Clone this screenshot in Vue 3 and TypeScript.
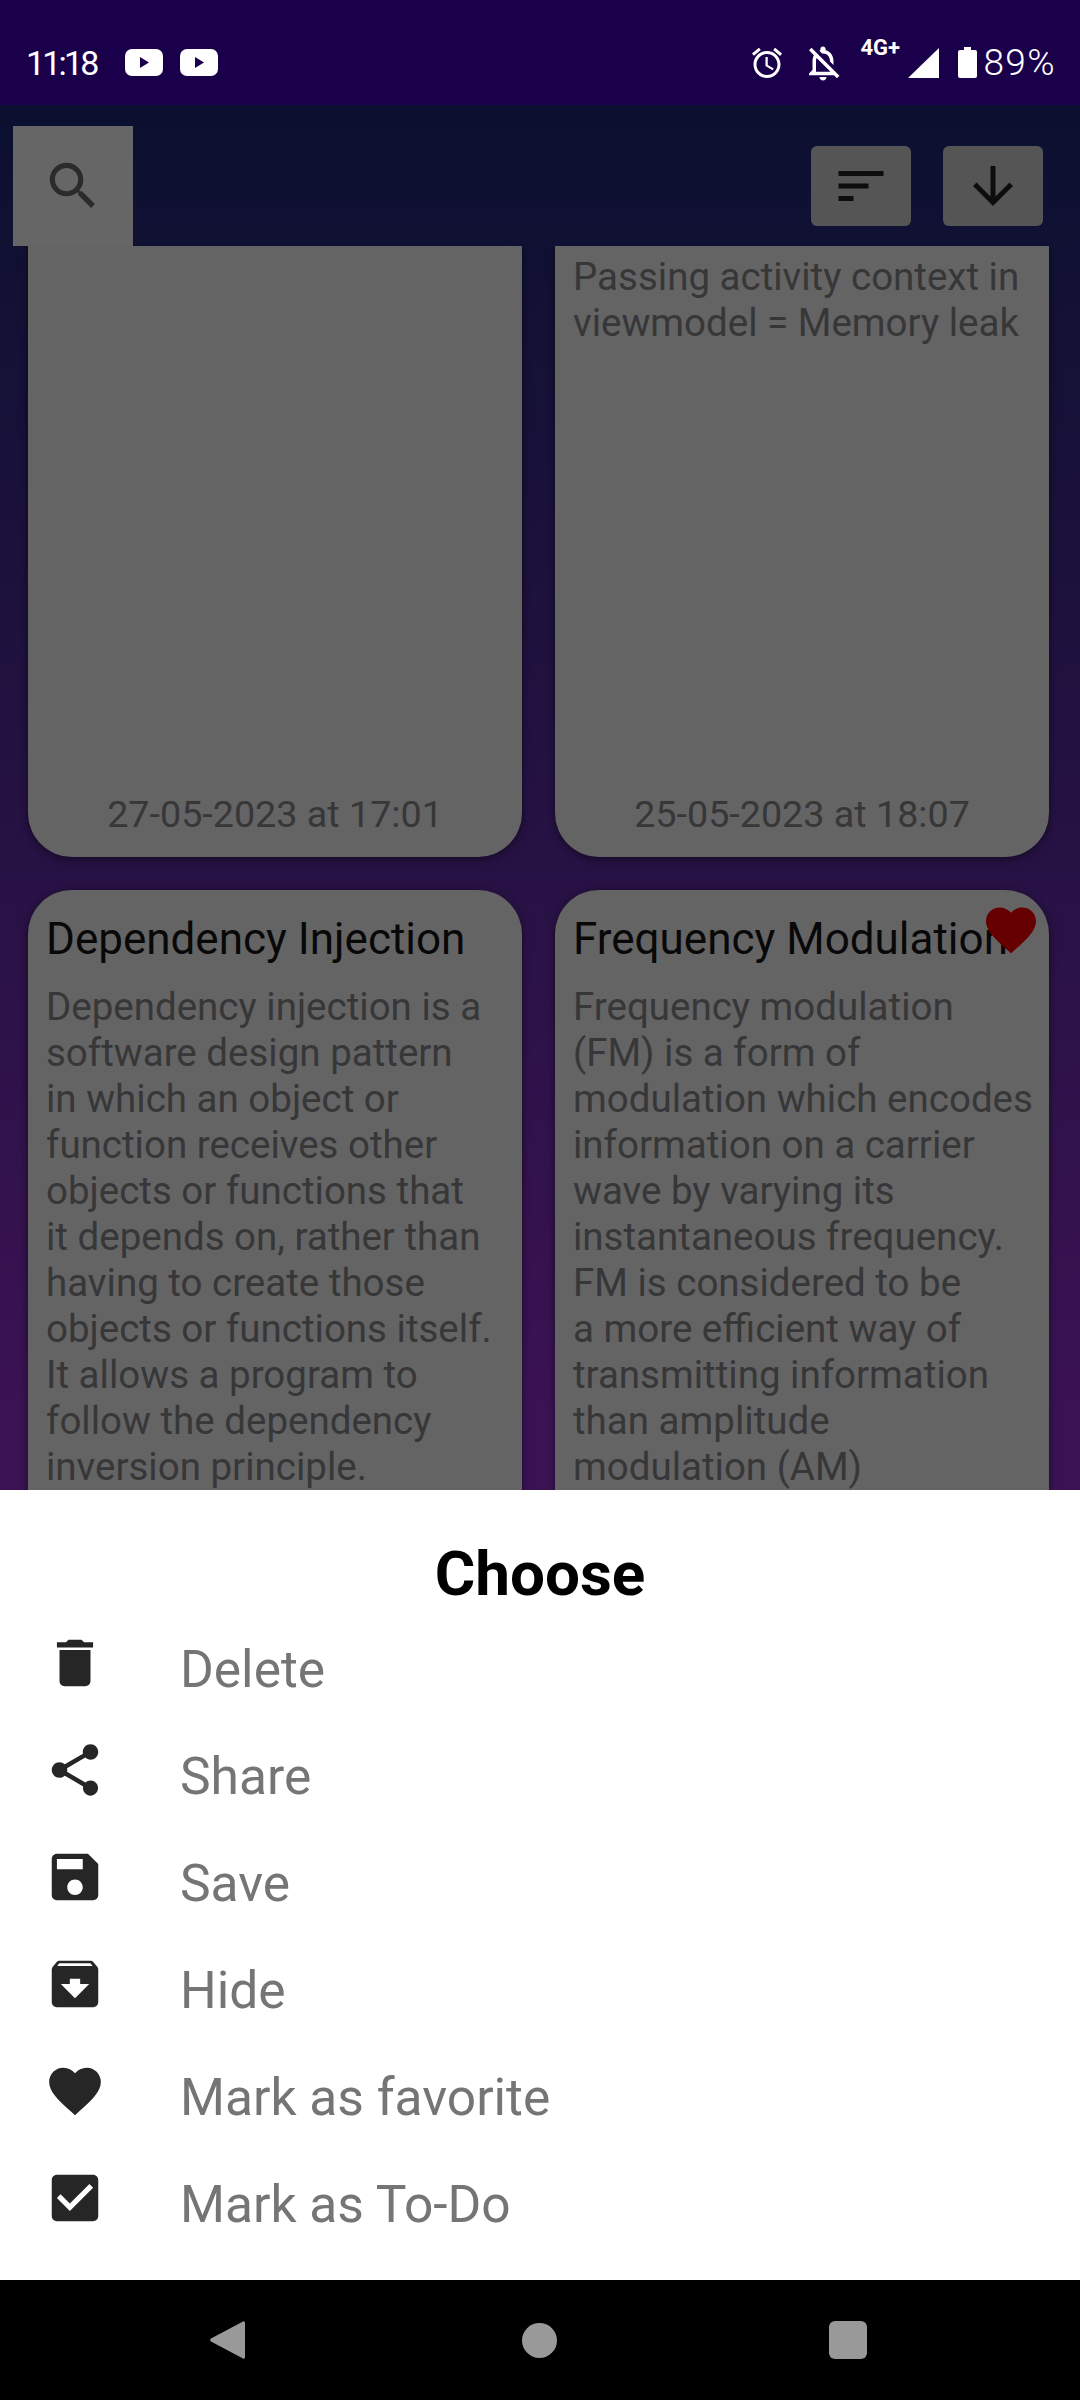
<template>
    <div class="phone">
        <div class="status">
            <span class="status__time">11:18</span>
            <svg v-for="i in 2" :key="i" class="status__yt" viewBox="0 0 38 27">
                <rect width="38" height="27" rx="7" fill="#fff" />
                <path d="M15 8l9 5.5-9 5.5z" fill="#1a004a" />
            </svg>
            <div class="status__right">
                <svg class="status__icon" viewBox="0 0 24 24"><path :d="icons.alarm" /></svg>
                <svg class="status__icon status__icon--bell" viewBox="0 0 24 24"><path :d="icons.bellOff" /></svg>
                <span class="status__net">4G+</span>
                <svg class="status__signal" viewBox="0 0 31 30"><path d="M31 0v30H0z" /></svg>
                <svg class="status__battery" viewBox="0 0 19 31">
                    <path d="M6 0h7v3h4a2 2 0 0 1 2 2v24a2 2 0 0 1-2 2H2a2 2 0 0 1-2-2V5a2 2 0 0 1 2-2h4z" />
                </svg>
                <span class="status__pct">89%</span>
            </div>
        </div>

        <div class="main">
            <div class="toolbar">
                <button class="toolbar__search">
                    <svg viewBox="0 0 24 24"><path :d="icons.search" /></svg>
                </button>
                <button class="toolbar__btn">
                    <svg viewBox="0 0 24 24"><path :d="icons.sort" /></svg>
                </button>
                <button class="toolbar__btn">
                    <svg viewBox="0 0 24 24"><path :d="icons.down" /></svg>
                </button>
            </div>

            <div class="notes">
                <div v-for="note in notes" :key="note.id" :class="['note', { 'note--clipped': note.clipped }]">
                    <svg v-if="note.favorite" class="note__heart" viewBox="0 0 24 24"><path :d="icons.heart" /></svg>
                    <div v-if="note.title" class="note__title">{{ note.title }}</div>
                    <div class="note__body">
                        <div v-for="line in note.lines" :key="line">{{ line }}</div>
                    </div>
                    <div v-if="note.date" class="note__date">{{ note.date }}</div>
                </div>
            </div>

            <div class="scrim"></div>

            <div class="sheet">
                <div class="sheet__title">Choose</div>
                <div v-for="action in actions" :key="action.label" class="action">
                    <svg class="action__icon" viewBox="0 0 24 24"><path :d="action.icon" /></svg>
                    <span class="action__label">{{ action.label }}</span>
                </div>
            </div>
        </div>

        <div class="nav">
            <svg class="nav__back" viewBox="0 0 36 40"><path d="M34 1.5L2 18.5a2 2 0 0 0 0 3l32 17a1.4 1.4 0 0 0 2-1.3V2.8a1.4 1.4 0 0 0-2-1.3z" /></svg>
            <div class="nav__home"></div>
            <div class="nav__recent"></div>
        </div>
    </div>
</template>

<script setup lang="ts">
const icons = {
    alarm: 'M22 5.72l-4.6-3.86-1.29 1.53 4.6 3.86L22 5.72zM7.88 3.39L6.6 1.86 2 5.71l1.29 1.53 4.59-3.85zM12.5 8H11v6l4.75 2.85.75-1.23-4-2.37V8zM12 4c-4.97 0-9 4.03-9 9s4.03 9 9 9 9-4.03 9-9-4.03-9-9-9zm0 16c-3.87 0-7-3.13-7-7s3.13-7 7-7 7 3.13 7 7-3.13 7-7 7z',
    bellOff: 'M12 22c1.1 0 2-.9 2-2h-4c0 1.1.9 2 2 2zm0-15.5c2.49 0 4 2.02 4 4.5v.1l2 2V11c0-3.07-1.63-5.64-4.5-6.32V4c0-.83-.67-1.5-1.5-1.5s-1.5.67-1.5 1.5v.68c-.24.06-.47.15-.69.23l1.64 1.64c.18-.02.36-.05.55-.05zM5.41 3.35L4 4.76l2.81 2.81C6.29 8.57 6 9.74 6 11v5l-2 2v1h14.24l1.74 1.74 1.41-1.41L5.41 3.35zM16 17H8v-6c0-.68.12-1.32.34-1.9L16 16.76V17z',
    search: 'M15.5 14h-.79l-.28-.27C15.41 12.59 16 11.11 16 9.5 16 5.91 13.09 3 9.5 3S3 5.91 3 9.5 5.91 16 9.5 16c1.61 0 3.09-.59 4.23-1.57l.27.28v.79l5 4.99L20.49 19l-4.99-5zm-6 0C7.01 14 5 11.99 5 9.5S7.01 5 9.5 5 14 7.01 14 9.5 11.99 14 9.5 14z',
    sort: 'M3 18h6v-2H3v2zM3 6v2h18V6H3zm0 7h12v-2H3v2z',
    down: 'M20 12l-1.41-1.41L13 16.17V4h-2v12.17l-5.58-5.6L4 12l8 8 8-8z',
    heart: 'M12 21.35l-1.45-1.32C5.4 15.36 2 12.28 2 8.5 2 5.42 4.42 3 7.5 3c1.74 0 3.41.81 4.5 2.09C13.09 3.81 14.76 3 16.5 3 19.58 3 22 5.42 22 8.5c0 3.78-3.4 6.86-8.55 11.54L12 21.35z',
    trash: 'M6 19c0 1.1.9 2 2 2h8c1.1 0 2-.9 2-2V7H6v12zM19 4h-3.5l-1-1h-5l-1 1H5v2h14V4z',
    share: 'M18 16.08c-.76 0-1.44.3-1.96.77L8.91 12.7c.05-.23.09-.46.09-.7s-.04-.47-.09-.7l7.05-4.11c.54.5 1.25.81 2.04.81 1.66 0 3-1.34 3-3s-1.34-3-3-3-3 1.34-3 3c0 .24.04.47.09.7L8.04 9.81C7.5 9.31 6.79 9 6 9c-1.66 0-3 1.34-3 3s1.34 3 3 3c.79 0 1.5-.31 2.04-.81l7.12 4.16c-.05.21-.08.43-.08.65 0 1.61 1.31 2.92 2.92 2.92 1.61 0 2.92-1.31 2.92-2.92s-1.31-2.92-2.92-2.92z',
    save: 'M17 3H5c-1.11 0-2 .9-2 2v14c0 1.1.89 2 2 2h14c1.1 0 2-.9 2-2V7l-4-4zm-5 16c-1.66 0-3-1.34-3-3s1.34-3 3-3 3 1.34 3 3-1.34 3-3 3zm3-10H5V5h10v4z',
    archive: 'M20.54 5.23l-1.39-1.68C18.88 3.21 18.47 3 18 3H6c-.47 0-.88.21-1.16.55L3.46 5.23C3.17 5.57 3 6.02 3 6.5V19c0 1.1.9 2 2 2h14c1.1 0 2-.9 2-2V6.5c0-.48-.17-.93-.46-1.27zM12 17.5L6.5 12H10v-2h4v2h3.5L12 17.5zM5.12 5l.81-1h12l.94 1H5.12z',
    check: 'M19 3H5c-1.11 0-2 .9-2 2v14c0 1.1.89 2 2 2h14c1.1 0 2-.9 2-2V5c0-1.1-.89-2-2-2zm-9 14l-5-5 1.41-1.41L10 14.17l7.59-7.59L19 8l-9 9z',
}

const notes = [
    { id: 1, clipped: true, lines: [], date: '27-05-2023 at 17:01' },
    {
        id: 2,
        clipped: true,
        lines: ['Passing activity context in', 'viewmodel = Memory leak'],
        date: '25-05-2023 at 18:07',
    },
    {
        id: 3,
        title: 'Dependency Injection',
        lines: [
            'Dependency injection is a',
            'software design pattern',
            'in which an object or',
            'function receives other',
            'objects or functions that',
            'it depends on, rather than',
            'having to create those',
            'objects or functions itself.',
            'It allows a program to',
            'follow the dependency',
            'inversion principle.',
        ],
    },
    {
        id: 4,
        title: 'Frequency Modulation',
        favorite: true,
        lines: [
            'Frequency modulation',
            '(FM) is a form of',
            'modulation which encodes',
            'information on a carrier',
            'wave by varying its',
            'instantaneous frequency.',
            'FM is considered to be',
            'a more efficient way of',
            'transmitting information',
            'than amplitude',
            'modulation (AM)',
        ],
    },
]

const actions = [
    { label: 'Delete', icon: icons.trash },
    { label: 'Share', icon: icons.share },
    { label: 'Save', icon: icons.save },
    { label: 'Hide', icon: icons.archive },
    { label: 'Mark as favorite', icon: icons.heart },
    { label: 'Mark as To-Do', icon: icons.check },
]
</script>

<style>
body {
    margin: 0;
    background: #000;
}
</style>

<style scoped>
.phone {
    display: flex;
    flex-direction: column;
    width: 1080px;
    height: 2400px;
    overflow: hidden;
    font-family: Roboto, "Noto Sans", sans-serif;
}

/* Status bar */
.status {
    display: flex;
    align-items: center;
    flex: none;
    height: 105px;
    padding: 20px 24px 0 26px;
    box-sizing: border-box;
    background: #1a004a;
    color: #fff;
}

.status__time {
    width: 99px;
    font-size: 34px;
    letter-spacing: -2.8px;
}

.status__yt {
    width: 38px;
    height: 27px;
    margin-right: 17px;
}

.status__right {
    display: flex;
    align-items: center;
    margin-left: auto;
}

.status__icon {
    width: 36px;
    height: 36px;
    fill: #fff;
    margin-right: 20px;
}

.status__icon--bell {
    width: 42px;
    height: 42px;
    margin-right: 16px;
    margin-left: -3px;
}

.status__net {
    align-self: flex-start;
    width: 48px;
    font-size: 22px;
    font-weight: 700;
    line-height: 22px;
    margin-top: -4px;
}

.status__signal {
    width: 31px;
    height: 30px;
    fill: #fff;
    margin-right: 19px;
}

.status__battery {
    width: 19px;
    height: 31px;
    fill: #fff;
    margin-right: 6px;
}

.status__pct {
    font-size: 37px;
    font-weight: 300;
    letter-spacing: 1.4px;
}

/* Main area with gradient */
.main {
    position: relative;
    flex: 1;
    min-height: 0;
    overflow: hidden;
    background: linear-gradient(180deg, #1d2a78 0%, #942fd0 60%, #942fd0 100%);
}

.toolbar {
    display: flex;
    align-items: center;
    height: 141px;
    padding: 21px 37px 0 13px;
    box-sizing: border-box;
}

.toolbar button {
    display: flex;
    align-items: center;
    justify-content: center;
    padding: 0;
    border: 0;
}

.toolbar__search {
    width: 120px;
    height: 120px;
    margin-right: auto;
    background: #fff;
}

.toolbar__search svg {
    width: 62px;
    height: 62px;
    fill: #6b6b6b;
}

.toolbar__btn {
    width: 100px;
    height: 80px;
    margin-left: 32px;
    border-radius: 6px;
    background: #d4d4d4;
}

.toolbar__btn svg {
    width: 60px;
    height: 60px;
    fill: #222;
}

/* Notes grid */
.notes {
    display: grid;
    grid-template-columns: 494px 494px;
    grid-auto-rows: min-content;
    column-gap: 33px;
    row-gap: 33px;
    padding: 0 31px 0 28px;
    height: 1400px;
    overflow: hidden;
}

.note {
    position: relative;
    box-sizing: border-box;
    height: 900px;
    padding: 18px 10px 0 18px;
    border-radius: 44px;
    background: #f9f9fc;
    box-shadow: 0 2px 8px rgba(0, 0, 0, 0.5);
    white-space: nowrap;
}

.note--clipped {
    height: 611px;
    padding-top: 0;
    border-radius: 0 0 44px 44px;
}

.note__heart {
    position: absolute;
    top: 10px;
    right: 8px;
    width: 60px;
    height: 60px;
    fill: #ff0000;
}

.note__title {
    font-size: 44px;
    line-height: 62px;
    color: #161616;
    margin-bottom: 14px;
}

.note__body {
    font-size: 38.5px;
    line-height: 46px;
    color: #8a8a8c;
}

.note--clipped .note__body {
    padding-top: 8px;
}

.note__date {
    position: absolute;
    right: 0;
    bottom: 20px;
    left: 0;
    font-size: 37.7px;
    line-height: 46px;
    text-align: center;
    color: #8a8a8c;
}

/* Dialog */
.scrim {
    position: absolute;
    inset: 0;
    background: rgba(0, 0, 0, 0.6);
}

.sheet {
    position: absolute;
    right: 0;
    bottom: 0;
    left: 0;
    height: 790px;
    box-sizing: border-box;
    padding-top: 48px;
    background: #fff;
}

.sheet__title {
    height: 74px;
    font-size: 62px;
    font-weight: 700;
    line-height: 72px;
    text-align: center;
    color: #000;
}

.action {
    display: flex;
    align-items: center;
    height: 107px;
    padding-left: 44px;
}

.action__icon {
    flex: none;
    width: 62px;
    height: 62px;
    margin-top: -6px;
    margin-right: 74px;
    fill: #262626;
}

.action__label {
    padding-top: 8px;
    font-size: 51.5px;
    color: #757575;
}

/* Navigation bar */
.nav {
    display: flex;
    align-items: center;
    flex: none;
    height: 120px;
    padding-left: 209px;
    box-sizing: border-box;
    background: #000;
}

.nav__back {
    width: 36px;
    height: 40px;
    fill: #999;
}

.nav__home {
    width: 35px;
    height: 35px;
    margin-left: 277px;
    border-radius: 50%;
    background: #999;
}

.nav__recent {
    width: 38px;
    height: 38px;
    margin-left: 272px;
    border-radius: 6px;
    background: #999;
}
</style>
